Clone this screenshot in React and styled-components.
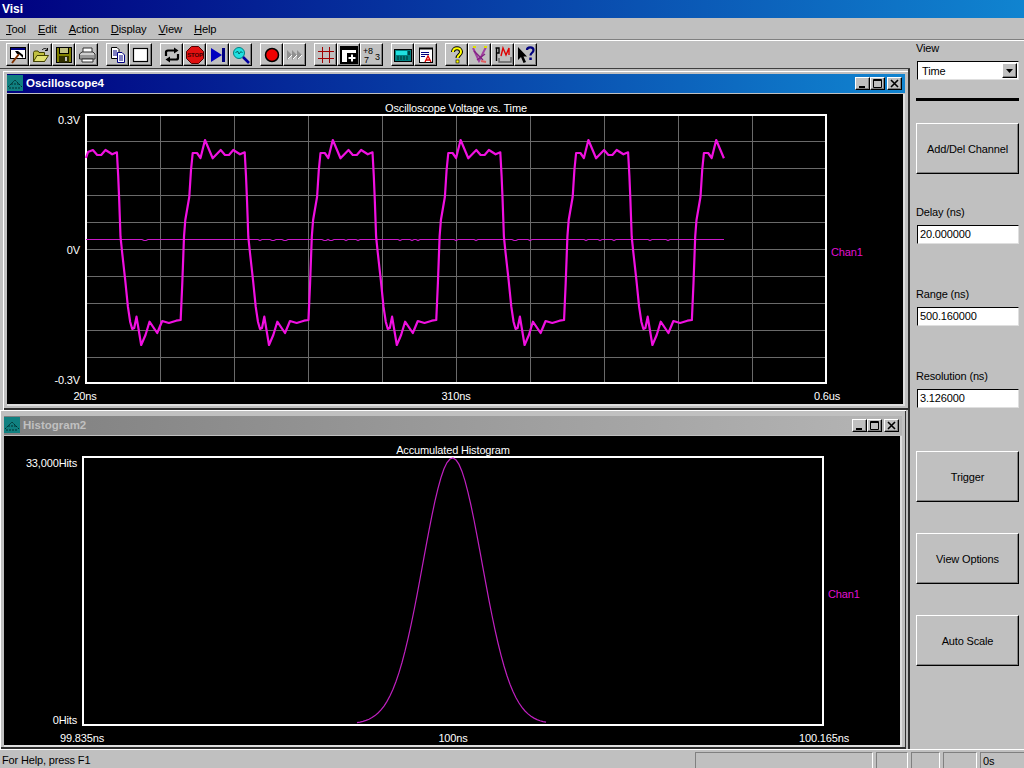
import styled, { createGlobalStyle } from 'styled-components';

const GlobalStyle = createGlobalStyle`
  html, body {
    margin: 0;
    padding: 0;
    background: #c0c0c0;
  }
  * {
    box-sizing: border-box;
  }
`;

const Screen = styled.div`
  width: 1024px;
  height: 768px;
  overflow: hidden;
  display: flex;
  flex-direction: column;
  background: #c0c0c0;
  color: #000;
  font-family: 'Liberation Sans', Arial, sans-serif;
  font-size: 11px;
  letter-spacing: -0.15px;
`;

const AppTitle = styled.div`
  height: 18px;
  flex: none;
  padding: 1px 0 0 2px;
  line-height: 16px;
  font-weight: bold;
  font-size: 12px;
  letter-spacing: 0;
  color: #fff;
  background: linear-gradient(90deg, #000080, #1084d0);
`;

const MenuBar = styled.div`
  height: 22px;
  flex: none;
  display: flex;
  align-items: center;
  gap: 12px;
  padding-left: 6px;
  font-size: 11.2px;
  border-bottom: 1px solid #808080;
`;

const MenuItem = styled.span`
  line-height: 16px;
`;

const Body = styled.div`
  flex: 1;
  min-height: 0;
  display: flex;
`;

const Workspace = styled.div`
  width: 910px;
  flex: none;
  display: flex;
  flex-direction: column;
`;

const Toolbar = styled.div`
  height: 29px;
  flex: none;
  display: flex;
  gap: 8px;
  padding: 2px 0 0 6px;
  border-top: 1px solid #fff;
  border-bottom: 1px solid #404040;
`;

const ToolGroup = styled.div`
  display: flex;
`;

const ToolButton = styled.div`
  width: 23px;
  height: 23px;
  display: flex;
  align-items: center;
  justify-content: center;
  background: #c0c0c0;
  border: 1px solid;
  border-color: #fff #000 #000 #fff;
  box-shadow: inset -1px -1px 0 #808080;
`;

const Mdi = styled.div`
  flex: 1;
  min-height: 0;
  display: flex;
  flex-direction: column;
  padding-top: 2px;
  overflow: hidden;
  border-right: 2px solid #303030;
`;

const ChildWindow = styled.div`
  flex: none;
  width: 906px;
  height: 339px;
  margin-left: ${(p) => p.$left}px;
  display: flex;
  flex-direction: column;
  background: #c0c0c0;
  padding: ${(p) => p.$padTop}px 4px ${(p) => p.$padBottom}px 4px;
  box-shadow: inset 1px 1px 0 #fff, inset -1px -2px 0 #303030;
`;

const WindowTitle = styled.div`
  height: 19px;
  flex: none;
  display: flex;
  align-items: center;
  gap: 3px;
  padding: 0 3px 1px 0;
  font-weight: bold;
  font-size: 11.5px;
  letter-spacing: 0;
  color: ${(p) => (p.$active ? '#fff' : '#c0c0c0')};
  background: ${(p) =>
    p.$active
      ? 'linear-gradient(90deg, #000080, #1084d0)'
      : 'linear-gradient(90deg, #808080, #b5b5b5)'};
`;

const WindowName = styled.span`
  flex: 1;
`;

const CaptionButtons = styled.div`
  display: flex;
  align-items: center;
`;

const CaptionButton = styled.div`
  width: 15px;
  height: 13px;
  margin-left: ${(p) => (p.$gap ? 2 : 0)}px;
  display: flex;
  align-items: center;
  justify-content: center;
  background: #c0c0c0;
  border: 1px solid;
  border-color: #fff #000 #000 #fff;
  box-shadow: inset -1px -1px 0 #808080;
`;

const Client = styled.div`
  flex: 1;
  min-height: 0;
  margin-top: 1px;
  background: #000;
  color: #fff;
  border-right: 2px solid #dfdfdf;
  border-bottom: 2px solid #dfdfdf;
  display: grid;
  grid-template-columns: 78px 742px 1fr;
  grid-template-rows: 20px 270px 1fr;
`;

const ChartTitle = styled.div`
  grid-column: 2;
  grid-row: 1;
  align-self: end;
  margin-bottom: -1px;
  text-align: center;
  line-height: 14px;
  position: relative;
`;

const YAxis = styled.div`
  grid-column: 1;
  grid-row: 2;
  display: flex;
  flex-direction: column;
  justify-content: space-between;
  align-items: flex-end;
  padding-right: 5px;
  margin-top: ${(p) => p.$top}px;
  margin-bottom: ${(p) => p.$bottom}px;
  line-height: 14px;
`;

const Plot = styled.svg`
  grid-column: 2;
  grid-row: 2;
  display: block;
  width: 742px;
  height: 270px;
`;

const Legend = styled.div`
  grid-column: 3;
  grid-row: 2;
  align-self: center;
  margin-top: 6px;
  padding-left: 4px;
  line-height: 14px;
  color: #e010d0;
`;

const XAxis = styled.div`
  grid-column: 2;
  grid-row: 3;
  display: flex;
  justify-content: space-between;
  padding-top: ${(p) => p.$pad}px;
  line-height: 14px;
`;

const XLabel = styled.span`
  width: 0;
  display: flex;
  justify-content: center;
  white-space: nowrap;
`;

const Side = styled.div`
  width: 114px;
  flex: none;
  display: flex;
  flex-direction: column;
  padding: 0 5px 0 6px;
  border-top: 1px solid #fff;
`;

const FieldLabel = styled.div`
  line-height: 14px;
  margin-top: ${(p) => p.$top}px;
  margin-bottom: 6px;
`;

const Combo = styled.div`
  width: 102px;
  height: 19px;
  margin-left: 1px;
  display: flex;
  align-items: center;
  justify-content: space-between;
  padding: 0 1px 0 4px;
  background: #fff;
  border: 1px solid;
  border-color: #000 #dfdfdf #dfdfdf #000;
  line-height: 14px;
`;

const ComboValue = styled.span`
  padding-top: 1px;
`;

const ComboArrow = styled.div`
  width: 15px;
  height: 15px;
  display: flex;
  align-items: center;
  justify-content: center;
  background: #c0c0c0;
  border: 1px solid;
  border-color: #fff #000 #000 #fff;
  box-shadow: inset -1px -1px 0 #808080;
`;

const Divider = styled.div`
  height: 3px;
  margin-top: 18px;
  background: #000;
`;

const PanelButton = styled.div`
  width: 103px;
  height: 51px;
  flex: none;
  margin-top: ${(p) => p.$top}px;
  display: flex;
  align-items: center;
  justify-content: center;
  border: 1px solid;
  border-color: #fff #000 #000 #fff;
  box-shadow: inset -1px -1px 0 #808080;
`;

const NumberField = styled.input`
  width: 102px;
  height: 19px;
  margin: 0 0 0 1px;
  padding: 0 0 1px 2px;
  display: block;
  background: #fff;
  border: 1px solid;
  border-color: #000 #dfdfdf #dfdfdf #000;
  outline: none;
  font: 11px 'Liberation Sans', Arial, sans-serif;
  letter-spacing: -0.15px;
  color: #000;
`;

const StatusBar = styled.div`
  height: 19px;
  flex: none;
  display: flex;
  align-items: flex-end;
  padding-left: 2px;
  border-top: 1px solid #fff;
`;

const StatusText = styled.div`
  width: 693px;
  flex: none;
  height: 16px;
  line-height: 16px;
`;

const StatusCell = styled.div`
  width: ${(p) => p.$width}px;
  height: 16px;
  flex: none;
  margin-right: ${(p) => p.$gap}px;
  padding-left: 2px;
  line-height: 16px;
  border-top: 1px solid #808080;
  border-left: 1px solid #808080;
  border-right: 1px solid #fff;
`;

// Page coordinates: each plot's viewBox starts at its own top-left corner
const CYCLE = [
  [180.7, 319.3], [182.3, 283], [184, 236.7], [185.3, 220], [189.3, 196.7],
  [191, 170], [192.7, 153], [197, 153], [200.5, 158], [205, 140], [212.7, 158.3],
  [220.7, 150], [225, 155], [229, 155], [233.3, 150], [240, 154.3], [244.7, 152.3],
  [246, 176], [247, 200], [248.3, 236.7], [250, 253], [253, 280], [255.7, 306.7],
  [258, 322], [260, 329], [262, 328], [264.3, 316.7], [269, 345], [273.3, 335],
  [277.3, 321.7], [285, 333], [290, 321], [296.7, 323], [304, 320.7], [308.5, 320],
];
const PERIOD = 127.8;

function scopePoints() {
  const pts = [[86, 158], [88, 152]];
  for (let k = -1; k <= 4; k++) {
    CYCLE.forEach(([x, y]) => {
      const sx = x + k * PERIOD;
      if (sx >= 90 && sx <= 724.5) pts.push([sx, y]);
    });
  }
  return pts.map((p) => p.join(',')).join(' ');
}

const FLAT_DIPS = [145, 260, 273, 285, 325, 331, 346, 358, 400, 412, 418, 456, 476, 515, 530, 586, 600, 614, 650, 668];

function flatPoints() {
  const pts = [];
  for (let x = 86; x <= 724; x += 2) {
    pts.push(`${x},${FLAT_DIPS.some((d) => Math.abs(d - x) < 2) ? 240.5 : 239.5}`);
  }
  return pts.join(' ');
}

function gaussPoints() {
  const pts = [];
  for (let x = 357; x <= 548; x += 3) {
    const d = (x - 452.5) / 29.5;
    const y = 724 - 266 * Math.exp(-0.5 * d * d);
    pts.push(`${x},${y.toFixed(1)}`);
  }
  return pts.join(' ');
}

function ScopePlot() {
  const vert = [1, 2, 3, 4, 5, 6, 7, 8, 9].map((i) => 85.5 + i * 74.1);
  const horiz = [1, 2, 3, 4, 5, 6, 7, 8, 9].map((i) => 114.5 + i * 27);
  return (
    <Plot viewBox="85 114 742 270">
      <g stroke="#6a6a6a" strokeWidth="1">
        {vert.map((x) => (
          <line key={x} x1={Math.round(x) + 0.5} x2={Math.round(x) + 0.5} y1="115" y2="383" />
        ))}
        {horiz.map((y) => (
          <line key={y} x1="86" x2="826" y1={y} y2={y} />
        ))}
      </g>
      <rect x="86" y="115" width="740" height="268" fill="none" stroke="#fff" strokeWidth="2" />
      <polyline points={flatPoints()} fill="none" stroke="#c818c8" strokeWidth="1.2" />
      <polyline points={scopePoints()} fill="none" stroke="#f010e0" strokeWidth="2.2" strokeLinejoin="round" />
    </Plot>
  );
}

function HistogramPlot() {
  return (
    <Plot viewBox="82 456 742 270">
      <rect x="83" y="457" width="740" height="268" fill="none" stroke="#fff" strokeWidth="2" />
      <polyline points={gaussPoints()} fill="none" stroke="#c020c0" strokeWidth="1.2" />
    </Plot>
  );
}

function ChildIcon() {
  return (
    <svg width="16" height="16" viewBox="0 0 16 16">
      <rect width="16" height="16" fill="#108080" />
      <path d="M1 12 L5 8 L8 5 L11 8 L15 12 M2 13 H14 M4 9 H12" fill="none" stroke="#003030" strokeWidth="1" strokeDasharray="2 1" />
    </svg>
  );
}

function WindowCaption({ name, active }) {
  return (
    <WindowTitle $active={active}>
      <ChildIcon />
      <WindowName>{name}</WindowName>
      <CaptionButtons>
        <CaptionButton>
          <svg width="9" height="9" viewBox="0 0 9 9"><rect x="1" y="7" width="6" height="2" /></svg>
        </CaptionButton>
        <CaptionButton>
          <svg width="9" height="9" viewBox="0 0 9 9"><path d="M0.5 0.5 H8.5 V8.5 H0.5 Z M0.5 1.5 H8.5" fill="none" stroke="#000" /></svg>
        </CaptionButton>
        <CaptionButton $gap>
          <svg width="9" height="9" viewBox="0 0 9 9"><path d="M1 1 L8 8 M8 1 L1 8" stroke="#000" strokeWidth="1.6" /></svg>
        </CaptionButton>
      </CaptionButtons>
    </WindowTitle>
  );
}

const Icon = ({ children }) => (
  <svg width="18" height="18" viewBox="0 0 18 18">
    {children}
  </svg>
);

const TOOL_GROUPS = [
  [
    // picture with a hammer
    <Icon key="hammer">
      <rect x="1.5" y="1.5" width="15" height="11" fill="#fff" stroke="#000" />
      <rect x="2" y="2" width="14" height="2" fill="#000080" />
      <path d="M3 17 L10 8" stroke="#803000" strokeWidth="2" />
      <path d="M6 5 L9 5 L14 9 L14 12 L10 8 L8 8 Z" fill="#000" />
    </Icon>,
    // open folder
    <Icon key="open">
      <path d="M1.5 6.5 L2.5 5 H6 L7 6.5 H12.5 V15.5 H1.5 Z" fill="#c0c040" stroke="#404000" />
      <path d="M1.5 15.5 L5 9.5 H16.5 L12.5 15.5 Z" fill="#e0e070" stroke="#404000" />
      <path d="M10 4 C12 2 14 2 15.5 4 M15.5 2 V4.5 H13" fill="none" stroke="#000" />
    </Icon>,
    // floppy
    <Icon key="save">
      <rect x="1.5" y="1.5" width="15" height="15" fill="#808000" stroke="#000" />
      <rect x="4.5" y="1.5" width="9" height="6" fill="#c0c080" stroke="#000" />
      <rect x="4" y="10" width="10" height="6.5" fill="#303000" />
      <rect x="10" y="11" width="2" height="4" fill="#c0c0c0" />
    </Icon>,
    // printer
    <Icon key="print">
      <path d="M5 2 H14 V7 H5 Z" fill="#fff" stroke="#303030" />
      <path d="M1.5 8 L4 6 H15 L17 8 V13 H1.5 Z" fill="#d0d0d0" stroke="#303030" />
      <path d="M2 10 H16 M2 12 H16" stroke="#606060" />
      <path d="M4 13 H15 V16 H4 Z" fill="#fff" stroke="#303030" />
    </Icon>,
  ],
  [
    // copy
    <Icon key="copy">
      <path d="M2.5 1.5 H8 L10 3.5 V12.5 H2.5 Z" fill="#fff" stroke="#000" />
      <path d="M4 5 H8 M4 7 H8 M4 9 H8" stroke="#000080" />
      <path d="M8.5 6.5 H13 L15.5 9 V16.5 H8.5 Z" fill="#fff" stroke="#000080" />
      <path d="M10 10 H14 M10 12 H14 M10 14 H14" stroke="#000080" />
    </Icon>,
    // white square
    <Icon key="blank">
      <rect x="1.5" y="2.5" width="14" height="13" fill="#fff" stroke="#000" strokeWidth="1.2" />
    </Icon>,
  ],
  [
    // loop
    <Icon key="loop">
      <path d="M3 10 V6 Q3 4.5 5 4.5 H12 M15 8 V12 Q15 13.5 13 13.5 H6" fill="none" stroke="#000" strokeWidth="2.2" />
      <path d="M11 1.5 L15.5 4.5 L11 7.5 Z M7 10.5 L2.5 13.5 L7 16.5 Z" fill="#000" />
    </Icon>,
    // stop sign
    <Icon key="stop">
      <path d="M5.5 0.5 H12.5 L17.5 5.5 V12.5 L12.5 17.5 H5.5 L0.5 12.5 V5.5 Z" fill="#e01010" stroke="#500000" />
      <text x="9" y="11" textAnchor="middle" fontSize="6" fontWeight="bold" fontFamily="Liberation Sans, sans-serif" fill="#400000">STOP</text>
    </Icon>,
    // step
    <Icon key="step">
      <path d="M2 2 L13 9 L2 16 Z" fill="#0000c0" />
      <rect x="13" y="2" width="3" height="14" fill="#000080" />
    </Icon>,
    // zoom
    <Icon key="zoom">
      <circle cx="7" cy="7" r="5.5" fill="#20e0e0" stroke="#008080" />
      <path d="M3.5 7 L5.5 5 L7 8 L9 5.5 L10.5 7" fill="none" stroke="#006060" />
      <path d="M11 11 L17 17" stroke="#0000a0" strokeWidth="2.6" />
    </Icon>,
  ],
  [
    // record
    <Icon key="record">
      <circle cx="9" cy="9" r="6.5" fill="#f00000" stroke="#000" strokeWidth="1.5" />
    </Icon>,
    // run, disabled
    <Icon key="run">
      <path d="M1 4 L6 9 L1 14 Z M6 4 L11 9 L6 14 Z M11 4 L16 9 L11 14 Z" fill="#909090" />
      <path d="M2 13 L6 9 M7 13 L11 9 M12 13 L16 9" stroke="#fff" />
    </Icon>,
  ],
  [
    // grid
    <Icon key="grid">
      <path d="M5.5 1 V17 M12.5 1 V17 M1 5.5 H17 M1 12.5 H17" stroke="#a00000" strokeWidth="1" />
    </Icon>,
    // window with plus
    <Icon key="cursor">
      <rect x="1" y="1" width="16" height="16" fill="#fff" stroke="#000" strokeWidth="2" />
      <rect x="2" y="2" width="14" height="2" fill="#000" />
      <rect x="7" y="7" width="10" height="10" fill="#000" />
      <path d="M12 8.5 V15.5 M8.5 12 H15.5" stroke="#fff" strokeWidth="2" />
    </Icon>,
    // digits
    <Icon key="digits">
      <text x="0" y="8" fontSize="9" fontFamily="Liberation Sans, sans-serif" fill="#000">+8</text>
      <text x="1" y="17" fontSize="9" fontFamily="Liberation Sans, sans-serif" fill="#000">7</text>
      <text x="12" y="14" fontSize="9" fontFamily="Liberation Sans, sans-serif" fill="#000">3</text>
    </Icon>,
  ],
  [
    // meter
    <Icon key="meter">
      <rect x="0.5" y="3.5" width="17" height="12" fill="#008080" stroke="#000" />
      <rect x="2" y="5" width="11" height="4" fill="#20e0e0" />
      <path d="M3 11 H15 M3 13 H15" stroke="#003030" strokeDasharray="2 1" />
      <rect x="14" y="5" width="2" height="4" fill="#004040" />
    </Icon>,
    // note
    <Icon key="note">
      <rect x="2.5" y="2.5" width="13" height="14" fill="#fff" stroke="#000" />
      <path d="M3 1 V4 M5 1 V4 M7 1 V4 M9 1 V4 M11 1 V4 M13 1 V4 M15 1 V4" stroke="#000" />
      <path d="M4 6.5 H12 M4 8.5 H12 M4 10.5 H8" stroke="#000080" />
      <path d="M8 16 L11 10 L14 16 M9 14 H13" fill="none" stroke="#e00000" strokeWidth="1.3" />
    </Icon>,
  ],
  [
    // yellow question mark
    <Icon key="help">
      <path d="M5 6 C5 1 13 1 13 6 C13 9 9.5 9 9.5 12" fill="none" stroke="#000" strokeWidth="4" />
      <path d="M5 6 C5 1 13 1 13 6 C13 9 9.5 9 9.5 12" fill="none" stroke="#ffff00" strokeWidth="2" />
      <rect x="8" y="14" width="3" height="3" fill="#ffff00" stroke="#000" strokeWidth="0.6" />
    </Icon>,
    // wave sketch
    <Icon key="wave">
      <path d="M2 2 L8 15 L15 1" fill="none" stroke="#a040a0" strokeWidth="2" />
      <path d="M3 5 L12 14 M6 14 L14 8" fill="none" stroke="#802080" strokeWidth="1.4" />
      <path d="M2 1 H5 M13 1 H16" stroke="#e0e000" strokeWidth="2" />
      <path d="M10 15 L15 16" stroke="#e06060" strokeWidth="2" />
    </Icon>,
    // pen trace
    <Icon key="trace">
      <path d="M1.5 2 H5 V7 H2.5 M2.5 2 V15" fill="none" stroke="#000" strokeWidth="1.4" />
      <path d="M7 10 L9 2 L12 9 L15 2 V9" fill="none" stroke="#e00000" strokeWidth="1.4" />
      <path d="M5 12 V16 H17 V11" fill="none" stroke="#606060" strokeWidth="1.4" />
    </Icon>,
    // help cursor
    <Icon key="whats">
      <path d="M1 1 V14 L4 11 L6.5 17 L9 16 L6.5 10.5 H10 Z" fill="#000" />
      <path d="M10 4 C10 0.5 16.5 0.5 16.5 4 C16.5 7 13.5 6.5 13.5 9.5" fill="none" stroke="#000080" strokeWidth="2.2" />
      <rect x="12.3" y="11.5" width="2.5" height="2.5" fill="#000080" />
    </Icon>,
  ],
];

const MENUS = ['Tool', 'Edit', 'Action', 'Display', 'View', 'Help'];
const STATUS_CELLS = [
  { width: 178, gap: 3 },
  { width: 32, gap: 3 },
  { width: 29, gap: 3 },
  { width: 34, gap: 3 },
  { width: 45, gap: 0, text: '0s' },
];

function App() {
  return (
    <Screen>
      <GlobalStyle />
      <AppTitle>Visi</AppTitle>
      <MenuBar>
        {MENUS.map((m) => (
          <MenuItem key={m}>
            <u>{m[0]}</u>
            {m.slice(1)}
          </MenuItem>
        ))}
      </MenuBar>
      <Body>
        <Workspace>
          <Toolbar>
            {TOOL_GROUPS.map((group, i) => (
              <ToolGroup key={i}>
                {group.map((icon) => (
                  <ToolButton key={icon.key}>{icon}</ToolButton>
                ))}
              </ToolGroup>
            ))}
          </Toolbar>
          <Mdi>
            <ChildWindow $left={3} $padTop={3} $padBottom={4}>
              <WindowCaption name="Oscilloscope4" active />
              <Client>
                <ChartTitle>Oscilloscope Voltage vs. Time</ChartTitle>
                <YAxis $top={-1} $bottom={-3}>
                  <span>0.3V</span>
                  <span>0V</span>
                  <span>-0.3V</span>
                </YAxis>
                <ScopePlot />
                <Legend>Chan1</Legend>
                <XAxis $pad={5}>
                  <XLabel>20ns</XLabel>
                  <XLabel>310ns</XLabel>
                  <XLabel>0.6us</XLabel>
                </XAxis>
              </Client>
            </ChildWindow>
            <ChildWindow $left={0} $padTop={6} $padBottom={2}>
              <WindowCaption name="Histogram2" />
              <Client>
                <ChartTitle>Accumulated Histogram</ChartTitle>
                <YAxis $top={0} $bottom={-1}>
                  <span>33,000Hits</span>
                  <span>0Hits</span>
                </YAxis>
                <HistogramPlot />
                <Legend>Chan1</Legend>
                <XAxis $pad={5}>
                  <XLabel>99.835ns</XLabel>
                  <XLabel>100ns</XLabel>
                  <XLabel>100.165ns</XLabel>
                </XAxis>
              </Client>
            </ChildWindow>
          </Mdi>
        </Workspace>
        <Side>
          <FieldLabel $top={0}>View</FieldLabel>
          <Combo>
            <ComboValue>Time</ComboValue>
            <ComboArrow>
              <svg width="7" height="4" viewBox="0 0 7 4"><path d="M0 0 H7 L3.5 4 Z" /></svg>
            </ComboArrow>
          </Combo>
          <Divider />
          <PanelButton $top={22}>Add/Del Channel</PanelButton>
          <FieldLabel $top={31}>Delay (ns)</FieldLabel>
          <NumberField readOnly value="20.000000" />
          <FieldLabel $top={43}>Range (ns)</FieldLabel>
          <NumberField readOnly value="500.160000" />
          <FieldLabel $top={43}>Resolution (ns)</FieldLabel>
          <NumberField readOnly value="3.126000" />
          <PanelButton $top={43}>Trigger</PanelButton>
          <PanelButton $top={31}>View Options</PanelButton>
          <PanelButton $top={31}>Auto Scale</PanelButton>
        </Side>
      </Body>
      <StatusBar>
        <StatusText>For Help, press F1</StatusText>
        {STATUS_CELLS.map((c, i) => (
          <StatusCell key={i} $width={c.width} $gap={c.gap}>
            {c.text}
          </StatusCell>
        ))}
      </StatusBar>
    </Screen>
  );
}

export default App;
